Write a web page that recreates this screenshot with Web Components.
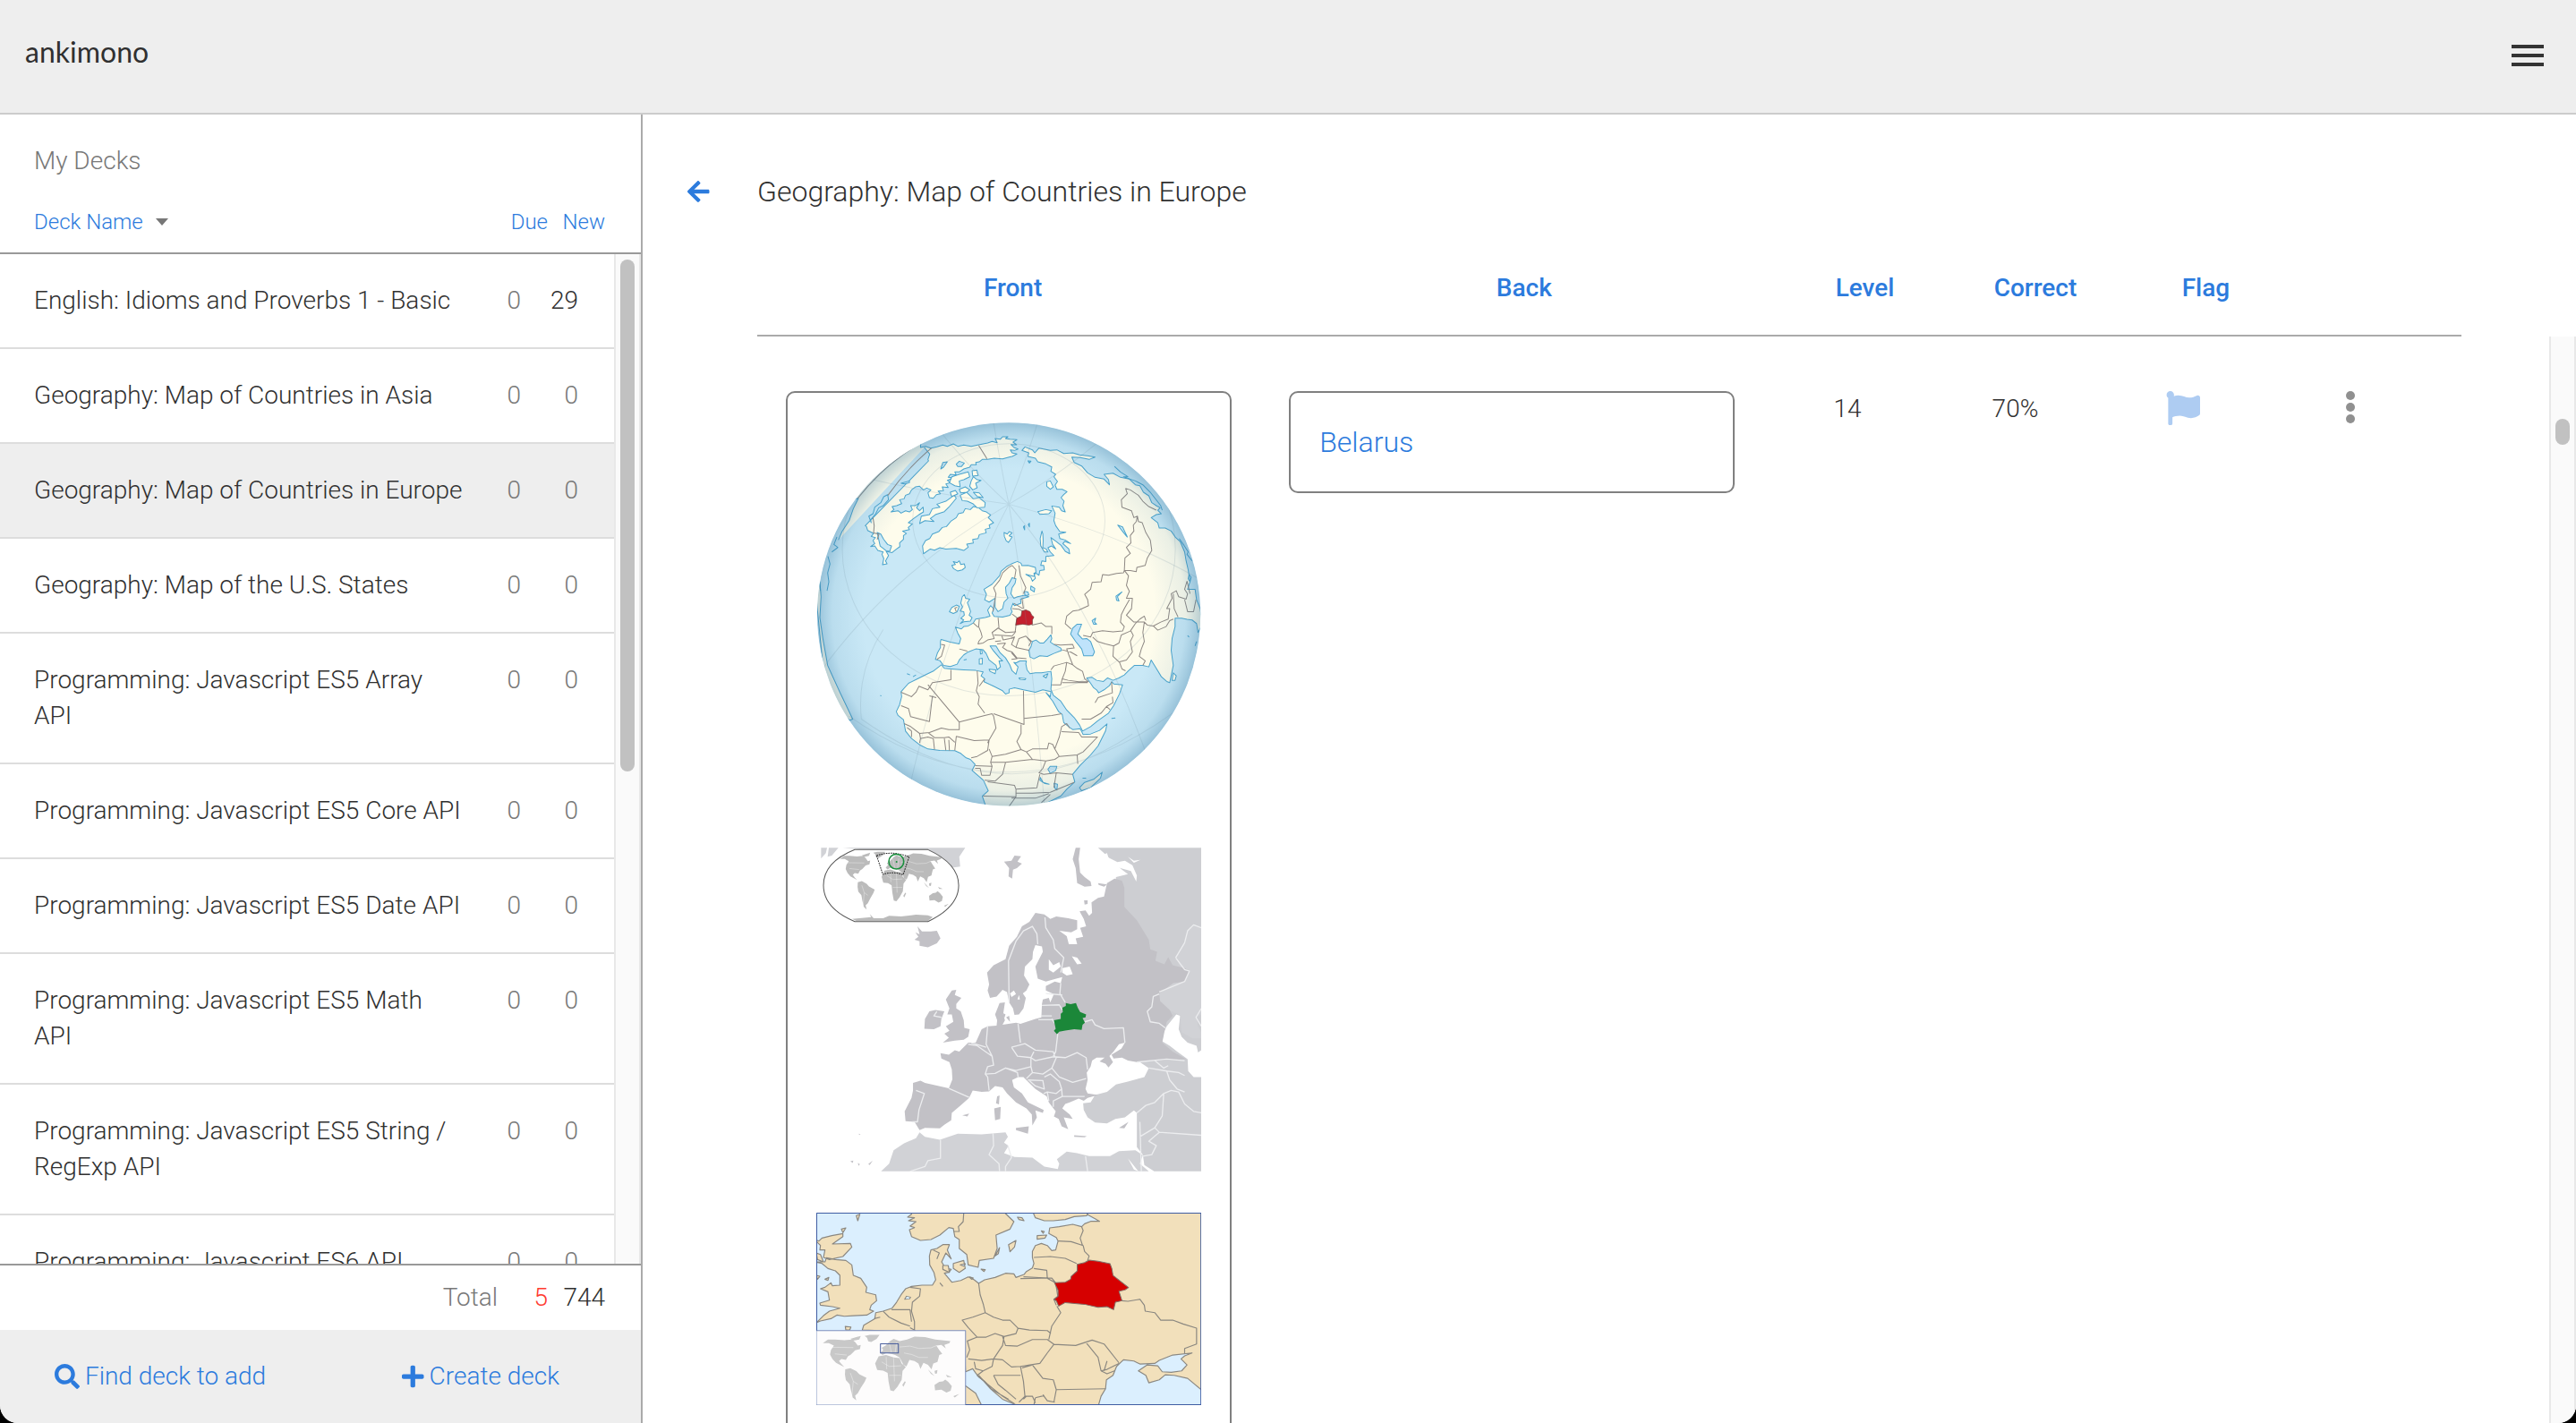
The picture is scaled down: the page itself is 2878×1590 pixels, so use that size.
<!DOCTYPE html>
<html lang="en">
<head>
<meta charset="utf-8">
<title>ankimono</title>
<style>
  html, body { margin: 0; height: 100%; }
  body {
    --ink: #303030; --muted: #787878; --link: #2c7bdd; --bar: #eee;
    background: #000; color: var(--ink);
    font: 300 28px/40px Roboto, "Liberation Sans", sans-serif;
  }
</style>
</head>
<body>
<anki-app>
  <app-header slot="header"></app-header>
  <deck-sidebar slot="sidebar">
    <deck-row due="0" new="29">English: Idioms and Proverbs 1 - Basic</deck-row>
    <deck-row due="0" new="0">Geography: Map of Countries in Asia</deck-row>
    <deck-row due="0" new="0" selected>Geography: Map of Countries in Europe</deck-row>
    <deck-row due="0" new="0">Geography: Map of the U.S. States</deck-row>
    <deck-row due="0" new="0">Programming: Javascript ES5 Array API</deck-row>
    <deck-row due="0" new="0">Programming: Javascript ES5 Core API</deck-row>
    <deck-row due="0" new="0">Programming: Javascript ES5 Date API</deck-row>
    <deck-row due="0" new="0">Programming: Javascript ES5 Math API</deck-row>
    <deck-row due="0" new="0">Programming: Javascript ES5 String / RegExp API</deck-row>
    <deck-row due="0" new="0">Programming: Javascript ES6 API</deck-row>
  </deck-sidebar>
  <deck-detail slot="main">Geography: Map of Countries in Europe</deck-detail>
</anki-app>

<script>
const define = (name, html) => {
  const template = document.createElement('template');
  template.innerHTML = `<style>:host,*{box-sizing:border-box}svg{display:block}
    button{font:inherit;color:inherit;background:none;border:0;padding:0;margin:0;cursor:pointer}</style>` + html;
  customElements.define(name, class extends HTMLElement {
    constructor() {
      super();
      this.attachShadow({ mode: 'open' }).append(template.content.cloneNode(true));
    }
    connectedCallback() {
      this.shadowRoot.querySelectorAll('[data-attr]').forEach(el => {
        const value = this.getAttribute(el.dataset.attr);
        el.textContent = value;
        el.classList.toggle('some', value !== '0');
      });
    }
  });
};

/* ---------- icons ---------- */
const icon = (w, d) => `<svg height="28" width="${w * 28 / 512}" viewBox="0 0 ${w} 512" fill="currentColor" aria-hidden="true"><path d="${d}"/></svg>`;
const ICONS = {
  search: icon(512, 'M505 442.7L405.3 343c-4.5-4.5-10.6-7-17-7H372c27.6-35.3 44-79.7 44-128C416 93.1 322.9 0 208 0S0 93.1 0 208s93.1 208 208 208c48.3 0 92.7-16.4 128-44v16.3c0 6.4 2.5 12.5 7 17l99.7 99.7c9.4 9.4 24.6 9.4 33.9 0l28.3-28.3c9.4-9.4 9.4-24.6.1-34zM208 336c-70.7 0-128-57.2-128-128 0-70.7 57.2-128 128-128 70.7 0 128 57.2 128 128 0 70.7-57.2 128-128 128z'),
  plus: icon(448, 'M416 208H272V64c0-17.67-14.33-32-32-32h-32c-17.67 0-32 14.33-32 32v144H32c-17.67 0-32 14.33-32 32v32c0 17.67 14.33 32 32 32h144v144c0 17.67 14.33 32 32 32h32c17.67 0 32-14.33 32-32V304h144c17.67 0 32-14.33 32-32v-32c0-17.67-14.33-32-32-32z'),
  back: icon(448, 'M257.5 445.1l-22.2 22.2c-9.4 9.4-24.6 9.4-33.9 0L7 273c-9.4-9.4-9.4-24.6 0-33.9L201.4 44.7c9.4-9.4 24.6-9.4 33.9 0l22.2 22.2c9.5 9.5 9.3 25-.4 34.3L136.6 216H424c13.3 0 24 10.7 24 24v32c0 13.3-10.7 24-24 24H136.6l120.5 114.8c9.8 9.3 10 24.8.4 34.3z'),
  flag: icon(512, 'M349.565 98.783C295.978 98.783 251.721 64 184.348 64c-24.955 0-47.309 4.384-68.045 12.013a55.947 55.947 0 0 0 3.586-23.562C118.117 24.015 94.806 1.206 66.338.048 34.345-1.254 8 24.296 8 56c0 19.026 9.497 35.825 24 45.945V488c0 13.255 10.745 24 24 24h16c13.255 0 24-10.745 24-24v-94.4c28.311-12.064 63.582-22.122 114.435-22.122 53.588 0 97.844 34.783 165.217 34.783 48.169 0 86.667-16.294 122.505-40.858C506.84 359.452 512 349.571 512 339.045v-243.1c0-23.393-24.269-38.87-45.485-29.016-34.338 15.948-76.454 31.854-116.95 31.854z')
};

/* ---------- shell ---------- */
define('anki-app', `
<style>
  :host { display: flex; flex-direction: column; height: 100vh; background: #fff; border-radius: 0 0 20px 20px; overflow: hidden; }
  .body { flex: 1; display: flex; min-height: 0; }
  ::slotted([slot=sidebar]) { flex: none; width: 718px; }
  ::slotted([slot=main]) { flex: 1; min-width: 0; }
</style>
<slot name="header"></slot>
<div class="body"><slot name="sidebar"></slot><slot name="main"></slot></div>`);

define('app-header', `
<style>
  :host { display: block; flex: none; background: var(--bar); border-bottom: 2px solid #ccc; }
  header { display: flex; justify-content: space-between; height: 126px; padding: 38px 36px 0 28px; align-items: flex-start; }
  a { font: 400 32px/40px Lato, sans-serif; color: var(--ink); text-decoration: none; }
  button { display: grid; gap: 6px; width: 36px; padding: 12px 0; }
  i { height: 4px; background: #333; }
</style>
<header><a href="#">ankimono</a><button aria-label="Menu"><i></i><i></i><i></i></button></header>`);

define('scroll-track', `
<style>
  :host { display: block; flex: none; width: 30px; background: #fafafa; border: 2px solid #e8e8e8; border-width: 0 2px; padding: 6px 5px; }
  :host([plain]) { padding-top: 92px; }
  div { height: 572px; border-radius: 8px; background: #c1c1c1; }
  :host([plain]) div { height: 29px; }
</style><div></div>`);

/* ---------- sidebar ---------- */
define('deck-sidebar', `
<style>
  :host { display: flex; flex-direction: column; border-right: 2px solid #aaa; }
  .top { padding: 32px 0 14px; border-bottom: 2px solid #999; }
  h2 { margin: 0 0 28px; padding: 0 38px; font: inherit; color: var(--muted); }
  .cols { display: grid; grid-template-columns: 1fr 56px 64px; padding: 0 40px 0 38px; text-align: right; }
  .top .cols { font-size: 24px; color: var(--link); }
  .cols > :first-child { justify-self: start; }
  .cols button { text-align: right; white-space: nowrap; }
  .sort { display: flex; align-items: center; gap: 14px; }
  .sort::after { content: ""; border: 7px solid transparent; border-top: 8px solid #777; border-bottom: 0; }
  .mid { flex: 1; display: flex; min-height: 0; overflow: hidden; }
  .list { flex: 1; overflow: hidden; }
  .total { padding-block: 16px; border-top: 2px solid #999; }
  .cols > .label { justify-self: end; color: var(--muted); }
  .due { color: #ff3b30; }
  footer { display: flex; background: var(--bar); height: 104px; }
  footer button { flex: 1; display: flex; align-items: center; justify-content: center; gap: 6px; color: var(--link); }
</style>
<div class="top">
  <h2>My Decks</h2>
  <div class="cols"><button class="sort">Deck Name</button><button>Due</button><button>New</button></div>
</div>
<div class="mid"><div class="list"><slot></slot></div><scroll-track></scroll-track></div>
<div class="cols total"><span class="label">Total</span><span class="due">5</span><span>744</span></div>
<footer><button>${ICONS.search}<span>Find deck to add</span></button><button>${ICONS.plus}<span>Create deck</span></button></footer>`);

define('deck-row', `
<style>
  :host { display: block; border-bottom: 2px solid #ddd; }
  :host([selected]) { background: var(--bar); }
  a { display: grid; grid-template-columns: 1fr 64px 64px; padding: 32px 40px 32px 38px; color: inherit; text-decoration: none; }
  span { text-align: right; color: var(--muted); }
  .some { color: var(--ink); }
</style>
<a href="#"><div><slot></slot></div><span data-attr="due"></span><span data-attr="new"></span></a>`);

/* ---------- deck detail ---------- */
define('deck-detail', `
<style>
  :host { display: flex; flex-direction: column; }
  .title { display: flex; align-items: center; padding: 64px 128px 66px 50px; }
  .title button { width: 78px; color: var(--link); }
  h1 { margin: 0; font: 300 32px/44px Roboto, sans-serif; }
  table { width: 100%; table-layout: fixed; border-collapse: collapse; }
  .wide { width: 30%; }
  .head { padding: 0 128px; }
  th { padding: 0 0 32px; border-bottom: 2px solid #aaa; font-weight: 500; color: var(--link); }
  .scroll { flex: 1; display: flex; min-height: 0; overflow: hidden; }
  .pane { flex: 1; padding: 61px 128px 0; overflow: hidden; }
  td { padding: 0; vertical-align: top; text-align: center; }
  td.wide { padding: 0 32px; text-align: left; }
  td button { display: block; margin: auto; }
  .flag { color: #aeccf2; } .flag svg { width: 38px; height: 38px; }
  .more { display: grid; gap: 3px; padding-block: 0; }
  .more i { width: 10px; height: 10px; border-radius: 5px; background: #909090; }
  .more { width: 10px; }
</style>
<div class="title"><button aria-label="Back">${ICONS.back}</button><h1><slot></slot></h1></div>
<div class="head"><table><thead><tr>
  <th class="wide">Front</th><th class="wide">Back</th><th>Level</th><th>Correct</th><th>Flag</th><th></th>
</tr></thead></table></div>
<div class="scroll">
  <div class="pane"><table><tbody><tr>
    <td class="wide"><flash-card><globe-map></globe-map><europe-map></europe-map><region-map></region-map></flash-card></td>
    <td class="wide"><flash-card>Belarus</flash-card></td>
    <td>14</td><td>70%</td>
    <td><button class="flag" aria-label="Flag card">${ICONS.flag}</button></td>
    <td><button class="more" aria-label="More"><i></i><i></i><i></i></button></td>
  </tr></tbody></table></div>
  <scroll-track plain></scroll-track>
</div>`);

define('flash-card', `
<style>
  :host { display: block; padding: 32px; border: 2px solid #808080; border-radius: 10px; color: var(--link); font-size: 32px; line-height: 46px; }
  ::slotted(*) { margin-bottom: 46px; }
</style><slot></slot>`);

/* ---------- maps ---------- */
const GRAT = [15, 50, 80, 118, 150, 188, 222, 258, 292, 330].map(a => {
  const r = a * Math.PI / 180;
  return `M711 340Q${711 + 500 * Math.cos(r)} ${340 + 500 * Math.sin(r)} ${711 + 1000 * Math.cos(r) * .8} ${340 + 1300 * Math.sin(r)}`;
}).join('');

define('globe-map', `
<style>:host{display:block}svg{width:100%}</style>
<svg viewBox="66 63 1290 1290" role="img" aria-label="Globe with Belarus highlighted" stroke-linejoin="round">
<defs>
 <clipPath id="c"><circle cx="711" cy="709" r="642"/></clipPath>
 <radialGradient id="g"><stop offset=".76" stop-color="#357ba4" stop-opacity="0"/><stop offset=".92" stop-color="#357ba4" stop-opacity=".1"/><stop offset="1" stop-color="#2b6f9a" stop-opacity=".32"/></radialGradient>
</defs>
<g clip-path="url(#c)">
<rect x="60" y="60" width="1300" height="1300" fill="#c9e8f6"/>
<g fill="#fefcec" stroke="#4aa3cc" stroke-width="3">
<path d="M140 460L152 432 176 395 190 355 207 320 150 330 200 200 420 90 415 150 432 146 450 152 470 148 490 142 505 146 525 138 540 146 560 142 585 146 610 141 625 138 640 135 655 130 672 134 665 120 683 122 690 114 708 114 700 120 715 122 738 124 725 132 737 141 718 140 728 150 742 155 730 160 716 158 722 168 738 172 722 180 712 182 690 188 662 186 640 190 622 190 612 198 600 200 602 208 585 208 580 216 560 222 545 232 530 232 535 242 515 240 508 250 525 252 505 260 515 268 500 272 508 284 488 282 492 295 474 296 482 305 468 308 458 320 445 318 440 302 450 292 436 286 425 292 412 280 398 282 385 292 378 305 365 310 360 322 345 325 352 338 335 345 320 348 326 358 316 366 340 362 350 370 365 362 378 366 388 358 382 345 398 345 412 335 402 352 412 362 424 350 425 366 410 375 392 388 374 402 388 406 374 418 378 425 355 430 368 438 358 445 358 458 345 470 346 482 335 490 320 502 300 498 308 512 298 530 303 540 288 543 292 522 286 508 290 500 272 495 262 480 248 482 262 472 256 462 264 452 250 448 258 438 238 428 234 415 230 412 442 195 440 190 446 172 428 150 462Z"/>
<path d="M425 506L422 480 432 462 446 455 455 440 476 432 488 418 502 415 518 396 535 385 542 372 558 368 565 355 582 358 592 348 610 352 622 362 636 366 650 376 642 385 660 402 645 410 648 420 632 424 635 436 612 442 608 455 590 458 592 470 570 474 575 484 560 495 535 488 500 490 480 486 462 494 448 490Z"/>
<path d="M520 545L532 542 525 532 538 536 545 530 550 542 562 540 565 552 555 560 540 564 526 556ZM555 650L562 643 566 655 580 658 572 670 578 685 583 700 578 712 588 720 582 732 560 734 548 740 560 728 550 722 562 712 560 700 548 698 556 684 550 672ZM512 700L520 686 535 678 545 682 538 700 525 706ZM615 828L620 826 622 840 616 842ZM612 858L622 856 622 876 612 876ZM645 893L668 895 665 908 648 900ZM745 922L768 924 765 928 748 927ZM826 916L842 908 836 922ZM1024 1238L1018 1258 985 1290 955 1300 948 1290 965 1272 995 1262ZM1262 905L1272 915 1268 930 1258 930ZM695 435L706 440 712 432 722 436 712 446 722 450 710 468 702 462 696 448ZM822 430L816 455 818 480 830 500 842 500 836 490 825 486 826 462 825 440ZM838 265L850 262 860 282 850 290 838 280ZM808 365L835 358 855 362 845 372 815 374ZM775 195L785 196 780 202ZM760 416L764 412 764 426ZM776 408L780 404 780 416Z"/>
<path d="M500 330L528 310 535 320 510 350 495 365 465 375 448 388 460 398 430 395 412 405 418 380 445 375 455 355 480 350 470 340ZM548 310L570 300 592 322 612 318 632 335 630 350 605 352 590 338 572 330 555 328ZM520 248L545 240 575 232 580 248 560 258 545 262 548 282 530 278 512 268ZM588 228L604 226 608 244 590 246ZM585 262L592 248 605 258 618 260 600 270 605 285 590 292 580 280ZM545 290L565 282 580 292 570 300 550 302ZM515 300L532 294 540 305 520 315ZM592 300L612 302 625 318 605 314Z"/>
<path d="M740 532L752 538 755 546 775 545 800 552 802 568 795 572 800 588 790 598 785 585 768 575 795 582 800 570 812 578 815 562 830 560 828 545 818 545 822 530 835 532 835 515 862 512 850 500 842 486 854 480 868 490 858 475 852 452 870 465 886 478 900 498 915 506 912 490 892 472 898 465 918 472 900 460 882 455 878 440 902 434 882 432 868 412 862 395 866 370 855 346 880 350 888 362 900 366 892 345 896 330 886 318 895 308 906 298 890 290 872 290 866 276 874 264 862 248 868 240 852 230 855 215 835 205 808 198 800 186 775 180 778 168 755 160 765 148 790 158 798 168 812 152 850 160 872 158 895 170 925 168 948 175 975 178 1000 182 980 190 950 184 922 182 930 200 955 212 975 235 1000 250 1030 256 1048 275 1045 258 1030 240 1060 236 1085 250 1115 256 1135 275 1150 278 1162 300 1180 312 1190 335 1205 345 1218 352 1210 360 1222 372 1205 375 1188 385 1210 402 1215 420 1235 420 1255 430 1270 452 1285 465 1300 500 1305 530 1312 560 1318 600 1310 625 1335 625 1340 660 1352 690 1360 740 1345 770 1340 740 1325 728 1308 726 1290 722 1268 722 1268 750 1258 790 1255 830 1262 880 1250 938 1240 934 1222 918 1205 890 1188 862 1180 885 1160 880 1132 880 1112 898 1098 912 1080 922 1060 930 1042 922 1028 934 1005 930 990 920 972 922 985 940 995 955 1005 962 1012 972 1030 962 1048 948 1056 935 1062 942 1092 945 1082 975 1062 1015 1045 1040 1010 1065 985 1085 958 1100 948 1080 930 1055 905 1030 885 1000 860 980 852 960 855 925 852 900 820 905 800 905 782 908 772 895 768 875 770 865 748 865 735 872 728 870 742 885 735 910 722 898 714 878 700 855 682 838 668 815 648 815 660 832 680 855 690 865 678 865 683 885 672 895 668 880 645 862 635 840 625 828 600 825 575 835 560 845 545 862 538 876 515 884 492 880 480 864 465 860 472 838 482 820 482 800 484 793 515 802 545 808 550 790 540 772 532 752 552 758 560 750 575 748 592 738 600 725 632 720 648 715 640 695 650 680 660 690 655 705 662 716 690 718 715 712 722 700 718 690 725 672 730 680 752 672 750 658 778 650 765 645 740 650 728 655 718 640 722 620 732 605 735 590 722 586 712 605 700 618 702 640 708 655 695 668 690 690 675 700 665 685 665 655 645 668 630 660 636 642 628 625 655 608 680 580 685 565 705 548 720 540Z"/>
<path d="M485 878L495 890 518 892 560 895 600 897 625 902 618 915 630 925 628 935 660 950 690 965 700 976 712 972 712 960 730 955 760 962 800 970 825 962 852 968 850 985 836 972 858 1000 878 1035 890 1045 895 1072 915 1088 925 1095 950 1092 960 1112 985 1110 1015 1098 1040 1076 1035 1100 1010 1150 985 1180 950 1215 925 1245 932 1270 905 1295 885 1318 840 1340 800 1370 640 1370 622 1318 642 1300 626 1265 588 1232 598 1212 582 1195 568 1190 550 1175 530 1166 480 1165 440 1160 415 1148 385 1125 365 1100 358 1062 340 1048 334 1035 345 1012 352 985 350 968 375 940 405 925 435 910 460 898Z"/>
<path d="M60 595L78 600 82 650 78 720 88 790 104 880 122 920 145 970 188 1060 178 1064 100 1000Z"/>
</g>
<g fill="#c9e8f6" stroke="#4aa3cc" stroke-width="3">
<path d="M790 800L802 795 815 805 828 805 840 792 852 778 855 790 850 802 862 810 885 822 888 830 862 840 840 850 815 848 795 858 782 852 778 830 785 818Z"/>
<path d="M925 755L940 742 955 742 948 760 942 775 958 792 972 790 985 800 998 835 992 848 962 848 955 825 935 800 918 775Z" fill="#bfe3fb"/>
<path d="M842 1228L850 1218 872 1218 868 1232 850 1242ZM990 730L1002 722 998 735 1005 742 995 742ZM1072 662L1070 648 1090 634 1075 650 1080 664ZM1076 410L1092 416 1108 450 1096 436ZM762 632L775 634 778 644 766 646ZM785 614L798 622 796 634 784 626ZM483 222L490 200 505 198 492 216ZM535 206L545 196 562 202 552 214 540 214ZM350 270L378 262 378 268 362 272ZM242 380L256 372 262 350 282 335 292 315 305 308 308 325 290 345 275 352 265 372 248 392 250 402ZM270 435L282 440 292 458 305 475 318 480 312 498 300 496 280 480ZM816 1255L826 1272 846 1278 832 1276 815 1265ZM862 1275L874 1278 872 1298 866 1292Z"/>
<path d="M1065 213L1085 232 1110 248 1095 248 1135 262 1160 275 1185 300 1220 345 1225 360M1315 575L1322 585 1318 600 1312 590ZM1282 455L1298 478 1312 500 1308 508 1325 530M105 515L112 540 104 570 108 600 102 630M135 450L125 475 138 485 118 500M75 585L80 630M370 908L380 912M390 918L400 912M1055 1058L1068 1056M958 1258L970 1258M560 862L570 860M280 981L284 982M1310 780L1315 785M1340 800L1335 815" fill="none"/>
</g>
<g fill="none" stroke="#8d8783" stroke-width="3">
<path d="M610 143L638 188M452 152Q370 220 306 310M425 130Q300 200 205 320M256 385L260 412 258 436 276 440 270 458M1102 287L1118 292 1145 310 1160 330 1180 348 1205 360M1102 287L1108 305 1088 325 1090 350 1122 362 1130 385 1142 380 1145 398 1158 402 1170 435 1185 460 1190 495 1175 520 1168 545 1140 552 1138 566 1118 562 1098 562 1100 520 1118 505 1105 485 1120 470 1118 445 1130 430 1128 410 1138 398 1142 380M1098 562L1095 570 1072 572 1045 578 1025 576 1020 600 990 602 985 625 965 642 975 660 978 680 945 695 925 698 905 715 900 740 920 758M1098 562L1112 580 1105 612 1115 632 1105 655 1125 655 1122 690 1105 712 1130 735 1165 735 1175 745 1195 748 1220 735 1245 725 1250 690 1240 690 1258 655 1255 640 1272 630 1280 650 1305 658 1310 640 1300 625 1308 598 1318 640M960 780L985 785 992 770 1025 764 1060 768 1092 765 1098 750 1085 735 1088 710 1098 690 1115 660M992 785L1008 800 1035 808 1062 815 1080 805 1088 778 1118 765 1135 740 1150 725 1165 715 1170 730M1062 815L1060 850 1082 870 1090 892 1102 898M1082 868L1105 862 1125 835 1118 800 1128 780 1120 765M1165 735L1160 770 1165 800 1155 825 1148 850 1168 865 1160 880M1195 748L1210 762 1238 750 1250 730 1262 725M1262 640L1265 690 1278 718M1300 660L1310 700 1330 700 1338 660M862 810L885 812 925 810 930 822 905 825 912 845 920 865 925 878 905 870 862 882 852 895M890 828L918 835 940 848M925 878L940 890 958 900 965 925 978 935 945 935 910 930 890 925 900 900 905 870M890 925L885 945 855 945M890 938L935 938 975 938M1055 935L1058 972 1010 988 1000 1005M1058 985L1060 1005 1038 1018 1020 1040 985 1060 955 1060M1038 1018L1050 1028"/>
<path d="M517 895L517 928 455 938 440 962 410 950 400 970 385 985 350 970M440 945L545 1070 630 1048 655 1042 660 1050 668 1090 645 1130 640 1140M445 982L468 988M455 982L445 1068 382 1052 375 1025 350 1015M605 898L608 940 602 965 612 985 608 1010 630 1040M630 925L612 950M760 965L762 1078 660 1042M762 1058L855 1048 888 1042M752 1078L752 1108 738 1135 752 1162 700 1178 655 1185 645 1160M752 1162L770 1170 790 1160 840 1160 845 1140 858 1145 865 1160 880 1120 888 1085 905 1075 915 1090M888 1102L945 1105 955 1120 1008 1120 960 1170 940 1180 880 1185 865 1160M940 1180L942 1210M770 1170L790 1195 835 1200 865 1195 880 1185M700 1205L790 1195M700 1205L690 1245 665 1268 630 1265M655 1185L650 1205 700 1205M650 1205L655 1218 598 1216M598 1225L615 1225 620 1248 648 1248 655 1218M585 1190L605 1185 640 1165 645 1130 595 1132 535 1118 530 1165M545 1070L545 1095 510 1095 485 1090 445 1105 412 1108 382 1085 360 1075M412 1108L415 1125 440 1120 458 1125 462 1162M440 1105L462 1122 495 1122 510 1120 530 1138M495 1125L500 1165M510 1130L512 1166M385 1120L385 1100 370 1088M415 1125L412 1140M835 1200L825 1225 812 1240 828 1245 870 1240 925 1245M815 1245L805 1290 735 1295 730 1282 640 1270M735 1295L735 1320 625 1318M735 1320L712 1352M735 1308L790 1308 850 1305 930 1272M720 1325L800 1325 845 1310M820 1340L850 1312M870 1240L862 1290"/>
<path d="M538 685L530 688 535 700M484 810L496 812 485 850 470 860M545 825L572 832M592 738L608 752M612 725L610 750 618 770 622 785M622 785L610 800 608 808 625 805 640 795 662 790 655 770 675 755 700 770 735 768M675 720L678 755M735 745L732 770 722 782 690 780 662 778M688 782L692 795 715 790 730 785 720 810 735 820 745 790 768 782 788 800M735 820L780 830M700 805L690 820 705 830 722 835 738 855 770 858M672 808L700 805M665 800L685 798M730 785L720 790M768 782L785 802 778 815M720 860L738 858 720 838M788 745L820 738 835 750 855 750 855 775M735 745L738 720 722 708M722 690L745 692 760 700M728 672L758 690M755 655L760 690M658 700L668 640 660 620 680 595 690 570 710 552 722 545M722 545L735 560 730 590M745 545L750 580 768 620 760 640"/>
</g>
<path d="M734 745L738 722 752 715 755 698 768 694 782 700 788 712 795 718 790 728 790 742 778 745 758 742Z" fill="#c3202e" stroke="#6b3b3b" stroke-width="2"/>
<g fill="none" stroke="#7d97a5" stroke-opacity=".2" stroke-width="3"><path d="${GRAT}"/><ellipse cx="711" cy="395" rx="322" ry="258"/><ellipse cx="711" cy="490" rx="558" ry="492"/><path d="M217 1060Q200 900 290 760M217 1060Q700 1400 1125 1110M175 1050Q720 1430 1260 1040"/></g>
<circle cx="711" cy="709" r="643" fill="url(#g)"/>
</g></svg>`);

/* World silhouette shared by both inset maps */
const WORLD = `
<path d="M88 512L105 500 128 500 160 502 185 500 196 508 205 520 215 518 212 532 196 536 182 550 172 556 165 568 150 565 142 572 150 582 160 592 148 586 132 578 120 565 112 550 115 535 125 520 108 512ZM180 498L200 492 215 488 210 500 190 504ZM228 488L245 484 278 484 268 498 250 508 240 506 236 494ZM163 600L180 596 200 606 210 616 234 628 228 642 215 662 205 680 196 688 200 704 188 694 182 670 178 650 165 636 162 618ZM263 580L275 556 300 552 325 560 345 562 352 580 366 592 355 605 352 635 338 658 325 673 314 670 308 640 305 612 290 604 270 602ZM362 640L366 642 358 658 354 652ZM290 535L285 528 298 520 312 506 325 498 345 505 370 500 395 490 430 492 465 500 515 505 512 512 495 518 500 530 485 518 468 520 478 535 488 548 478 552 472 575 458 580 452 600 440 585 425 578 415 598 408 580 395 572 378 568 368 590 358 585 345 560 330 552 318 548 300 545 288 552 280 545ZM462 652L478 642 490 640 498 634 508 642 520 656 516 672 502 678 485 668 464 670ZM440 600L452 612 462 622 450 615ZM462 605L472 602 470 614 464 615ZM500 618L520 626 505 626ZM525 690L545 682 530 694Z"/>`;
const WORLD_LINES = `<path d="M120 526L190 527M128 548L168 552M180 612L190 640 205 650M190 640L185 690M285 575L310 590 350 588M300 558L302 600M325 562L328 640M310 620L350 620M345 525L380 522 410 530 450 528 470 520M360 545L385 550 410 560 440 560M310 510L318 545M335 510L330 545"/>`;

define('europe-map', `
<style>:host{display:block}svg{width:100%}</style>
<svg viewBox="66 81 1290 1086" role="img" aria-label="Map of Europe with Belarus highlighted" stroke-linejoin="round">
<g fill="#d1d2d6">
<path d="M82 82L102 82 98 100 82 118ZM108 82L140 82 118 108 104 112ZM155 82L565 82 545 112 548 145 510 150 350 100Z"/>
<path d="M1010 82L1356 82 1356 760 1345 768 1340 745 1310 735 1290 715 1280 690 1285 645 1272 640 1240 680 1230 700 1225 730 1250 745 1275 765 1310 790 1312 830 1330 850 1356 850 1356 1166 1198 1166 1165 1145 1160 1110 1140 1085 1140 970 1130 962 1100 985 1068 990 1040 1005 1000 1002 975 985 962 960 960 938 985 935 1000 910 1040 900 1070 875 1110 865 1165 850 1180 820 1150 800 1140 790 1050 400 1070 180 1110 170 1090 155 1050 120 1030 100Z" fill="#cdced2"/>
<path d="M1270 450L1300 400 1310 360 1330 340 1356 345 1356 640 1340 650 1345 680 1356 700 1356 720 1325 720 1290 700 1285 642 1215 610 1208 575 1240 535 1300 530 1316 490 1290 490Z"/>
<path d="M283 1166L310 1140 325 1095 360 1072 400 1055 412 1035 430 1050 480 1060 540 1040 620 1042 700 1035 708 1050 695 1070 710 1080 695 1105 730 1118 790 1120 830 1150 875 1158 880 1140 872 1125 905 1100 940 1105 980 1115 1050 1115 1080 1098 1135 1095 1160 1112 1150 1140 1180 1166Z"/>
</g>
<g fill="#c2c1c6">
<path d="M1040 200L1065 185 1090 192 1098 215 1098 280 1140 325 1180 390 1185 422 1208 430 1202 460 1232 472 1245 448 1260 475 1300 485 1316 495 1300 530 1262 535 1215 570 1218 595 1250 625 1260 645 1240 665 1232 700 1225 735 1260 765 1305 790 1200 795 1140 800 1110 795 1090 785 1062 788 1055 775 1088 755 1100 735 1080 740 1062 765 1048 780 1060 800 1045 818 1035 805 1015 798 1032 785 1005 785 990 795 985 815 972 835 975 860 968 890 975 905 1010 910 975 920 962 930 945 922 915 935 900 940 890 955 915 975 925 990 895 985 910 1025 888 1015 878 990 862 982 868 965 845 935 838 915 800 890 775 865 760 850 742 850 722 860 728 885 755 905 775 935 828 960 825 970 800 962 805 985 790 1012 788 975 770 955 735 935 705 905 690 885 665 880 645 898 620 900 590 895 578 920 550 945 520 970 518 995 495 1010 480 1022 430 1020 412 1028 395 1000 365 998 362 965 385 920 390 895 390 870 415 862 430 870 510 888 522 858 520 825 512 800 485 788 482 770 510 775 530 760 545 765 575 735 600 735 620 690 640 680 670 678 672 660 665 640 680 602 698 600 692 640 698 660 690 675 735 668 750 672 800 655 820 650 822 605 825 590 845 585 850 600 862 572 835 560 835 545 865 530 885 535 890 515 870 520 835 530 808 520 800 480 825 430 822 412 800 408 792 430 790 455 765 480 762 510 780 540 770 560 758 570 768 585 760 620 745 640 730 642 725 620 712 600 705 565 690 558 670 580 648 585 640 560 645 540 638 500 660 475 700 455 712 410 738 380 755 345 780 330 800 300 830 305 850 320 870 312 910 318 940 325 940 355 920 365 880 360 905 378 912 405 940 405 935 385 960 380 950 350 970 345 962 320 948 295 968 292 980 310 990 300 988 265 1010 250 1030 245Z"/>
<path d="M935 82L950 82 945 120 950 165 965 180 985 195 988 210 965 212 940 200 935 150 925 120ZM1010 200L1040 205 1030 212 1012 206ZM963 258L975 258 975 270 965 272ZM695 128L720 125 730 108 752 110 740 128 755 135 738 150 725 155 722 185 710 178 712 150ZM398 365L412 372 405 345 420 362 450 362 470 360 482 385 470 402 440 415 412 410 412 395 395 390 408 380ZM500 590L520 560 535 558 530 575 552 585 535 605 535 620 550 630 560 660 562 685 580 690 575 715 560 725 530 728 490 735 510 718 495 705 512 695 500 680 525 665 520 640 505 640 512 620ZM430 655L445 630 465 625 495 630 485 655 482 680 460 690 428 688ZM662 955L684 950 682 990 665 995ZM672 915L680 912 678 942 668 938ZM735 1020L778 1015 775 1040 735 1028ZM930 1045L972 1048 965 1052 930 1050ZM1080 1020L1112 1000 1098 1022ZM555 978L578 972 572 982ZM690 635L700 640 695 655ZM702 650L712 645 715 665ZM180 1132L190 1130 188 1138ZM205 1138L212 1142 208 1148ZM240 1142L255 1130 245 1145ZM70 835L80 832M104 878L110 892ZM208 1040L214 1042 210 1044Z"/>
</g>
<g fill="#fff"><path d="M922 445L940 450 955 470 940 472ZM890 485L915 480 925 505 905 510 890 500ZM845 455L860 475 880 465 885 480 860 500 845 490ZM715 570L728 560 735 572 720 582ZM740 590L745 575 748 590ZM1012 110L1040 100 1045 115 1075 130 1100 125 1125 140 1140 175 1138 195 1120 160 1085 150 1060 140ZM1110 112L1130 125 1152 122 1130 132ZM1110 1122L1145 1166 1130 1160Z"/></g>
<g fill="none" stroke="#ecedef" stroke-width="4">
<path d="M712 600L710 460 735 395 760 360 790 345 805 370 808 405M832 315L835 350 860 390 865 420 895 450 885 500M885 535L882 570 900 600M835 570L890 575M822 610L880 608 890 625M818 645L855 645M855 655L865 670M810 658L860 658M742 672L750 735M720 750L765 738 800 760 860 765 865 782M875 705L868 765 860 780M965 665L990 658 1000 675 1030 688 1095 685 1100 735M720 750L740 780 785 785 795 765M640 680L635 740 655 780 660 810 640 815 632 840 665 838 700 820 735 828 785 815 785 785M575 740L605 745 640 770 655 780M585 735L635 750M785 785L800 795 860 782 900 785 940 768 970 785 975 825M700 820L740 835 742 850M785 815L790 835 825 840 855 820 870 785M855 820L880 850 925 868 970 855M790 835L770 855M775 860L825 862 830 890 800 880 780 862M830 850L850 840 880 865 888 890 870 905 840 900 828 905M888 890L890 915 965 915M860 950L860 930 890 915M840 900L845 930M510 888L578 918M645 895L640 850 632 840M400 895L428 905 410 960 405 1000 388 1000M470 630L460 645 485 650M482 1060L482 1122 440 1130 430 1150 380 1166M658 1038L660 1080 645 1110 678 1140 680 1166M708 1080L720 1120 700 1150 700 1166M968 1115L975 1166M1140 970L1170 945 1200 935 1230 905 1255 895 1280 900 1300 940 1330 965 1356 970M1230 905L1225 980 1200 1020 1150 1050M1150 1000L1155 1166M1200 1020L1215 1035 1356 1045M1215 1035L1180 1065 1205 1080 1190 1110 1160 1115M1140 800L1240 790 1300 795M1180 820L1240 830 1250 860 1275 890 1300 900M1240 830L1280 835 1300 845M1200 795L1230 820 1245 812M1215 572L1195 580 1190 615 1175 630 1185 665 1215 670 1235 685M1270 450L1300 400 1310 360 1330 340 1356 350M1270 450L1300 490 1316 495 1300 530 1215 565M1356 620L1338 650 1356 680"/>
</g>
<path d="M862 660L885 655 885 638 892 632 890 618 902 612 902 602 918 606 936 602 942 618 950 632 970 640 968 650 958 652 966 668 958 675 955 692 930 690 900 694 880 698 872 706 862 695 868 688Z" fill="#1b8739"/>
<path d="M195 88H440Q543 135 543 208Q543 280 440 329H195Q90 285 90 208Q90 130 195 88Z" fill="#fff"/>
<g transform="translate(75 -331) scale(.798 .88)"><g fill="#bbb">${WORLD}</g><g fill="none" stroke="#fff" stroke-opacity=".6" stroke-width="2">${WORLD_LINES}</g></g>
<path d="M186 320L250 314 245 304 258 318 290 318 310 310 350 312 400 306 440 308 456 314 440 327H200Z" fill="#bbb"/>
<path d="M195 88H440Q543 135 543 208Q543 280 440 329H195Q90 285 90 208Q90 130 195 88Z" fill="none" stroke="#555" stroke-width="3"/>
<path d="M268 108Q320 90 377 112L357 172Q320 160 289 171Z" fill="none" stroke="#222" stroke-width="3" stroke-dasharray="5 3"/>
<circle cx="334" cy="128" r="25" fill="none" stroke="#1b8f3e" stroke-width="5"/><circle cx="335" cy="129" r="3" fill="#1b8f3e"/>
</svg>`);

define('region-map', `
<style>:host{display:block}svg{width:100%}</style>
<svg viewBox="66 75 1290 645" role="img" aria-label="Central Europe with Belarus highlighted" stroke-linejoin="round">
<rect x="66" y="75" width="1290" height="645" fill="#dbeffe"/>
<g fill="#f2e0bb" stroke="#8a8780" stroke-width="3.5">
<path d="M1370 60L970 60 975 82 1000 95 1015 104 985 104 965 112 955 122 925 114 880 122 848 126 845 145 870 158 876 170 868 200 855 202 840 185 820 178 800 185 790 205 790 225 795 245 790 260 770 272 762 282 735 292 728 280 700 278 665 292 630 300 610 312 595 300 575 290 550 302 520 308 505 290 495 278 510 275 518 265 498 260 486 240 500 210 518 230 505 200 512 182 490 182 470 195 450 200 445 220 446 250 460 275 466 300 455 318 420 318 385 322 365 330 350 350 335 375 320 395 290 405 265 410 262 430 225 452 220 468 400 475 560 475 566 608 590 598 600 612 610 625 630 640 655 670 690 700 750 725 1010 725 1020 690 1035 665 1038 635 1060 620 1072 590 1095 568 1130 572 1150 582 1200 580 1215 570 1260 552 1325 545 1300 555 1288 565 1308 585 1290 605 1255 610 1225 608 1210 588 1175 585 1145 605 1170 620 1180 645 1215 635 1235 618 1265 620 1310 630 1370 680Z"/>
<path d="M380 60L385 80 372 90 395 92 375 102 400 105 380 120 395 125 378 132 385 155 415 168 450 165 480 150 510 125 525 128 530 155 545 165 545 195 570 215 575 250 608 258 612 235 660 228 672 195 668 150 715 130 728 105 700 78 690 60ZM786 60L800 92 830 102 860 102 900 98 930 88 972 85 980 60ZM60 240L95 240 100 226 130 232 165 235 185 250 190 285 215 295 235 325 232 342 265 350 268 370 250 385 245 400 258 405 235 418 190 420 160 422 135 418 115 430 80 438 66 444 90 420 110 405 145 395 120 390 80 385 78 378 110 368 105 340 80 330 95 325 115 310 120 320 145 318 145 285 130 270 105 262 85 245ZM60 165L75 170 85 160 118 152 155 145 155 155 120 180 180 178 185 190 155 222 110 232 90 225 95 200 78 200 80 185ZM60 635L566 655 600 680 622 725 560 725ZM525 245L560 235 565 262 545 275 525 262ZM490 252L508 252 512 275 490 265ZM710 182L735 168 730 190 715 206ZM665 220L680 192 676 212ZM806 152L838 150 832 160 806 164ZM740 90L755 92 762 102 745 98ZM618 264L632 266 628 272ZM200 85L212 80 205 102ZM150 130L165 126 155 142ZM95 298L108 292 105 302ZM66 285L78 288 70 298ZM163 456L182 458 178 468 165 468ZM820 136L830 138 826 144ZM66 210L80 215 90 240 70 232ZM580 290L592 294 586 298Z"/>
</g>
<path d="M362 365L368 355 382 358 378 364ZM548 250L566 246 560 254Z" fill="#dbeffe" stroke="#8a8780" stroke-width="3"/>
<g fill="none" stroke="#8a8780" stroke-width="3.5">
<path d="M560 75L558 105 542 122 545 138 525 138M955 122L960 135 950 160 958 185M876 170L920 172 960 185 965 205 980 220 975 235M795 225L850 222 900 228 938 245M795 262L838 268 840 294M760 290L838 294 868 310M750 296L855 294 868 310 875 355 862 365 870 385M610 312L615 350 625 380 632 410M872 388L885 410 855 455 845 500M632 410L660 425 690 435 715 435 742 462 735 480 695 490 665 480 635 492 605 492 575 460 555 435 590 425 632 410M742 462L780 468 840 470 852 480M605 492L572 505 580 535 570 560M695 490L690 520 660 565 620 570 575 565M690 490L700 520 740 522 790 500 840 500 862 516 840 545 815 580 750 590 720 592 690 568 660 565M660 565L655 590 625 605 600 598 595 575M862 516L935 520 990 502 1030 515 1080 578M968 508L1010 560 1020 605 1040 600 1080 580M1020 605L1040 615 1065 605M1040 572L1030 605M1090 370L1110 372 1150 365 1165 385 1168 405 1200 410 1220 435 1260 435 1295 448 1340 462 1340 515 1300 530 1300 548M750 590L760 640 765 690 745 710M755 595L790 585 825 630 860 635 870 668 1035 665M870 668L862 710M660 620L750 620M660 620L675 650 700 670 735 700M765 690L790 690 800 712M830 688L800 695M825 685L840 705 865 710M380 325L415 330 412 355 388 375 385 405 395 440 395 468M290 405L310 425 350 445 380 455M318 400L380 400 385 440M625 605L605 620 640 650 690 690 730 715M610 620L650 665 710 700M260 430L280 425M480 310L490 322M458 200L478 210 470 230M380 460L398 470M800 695L795 720M770 690L760 700"/>
</g>
<path d="M864 310L900 308 918 298 920 288 940 270 940 248 965 242 980 234 1010 238 1050 246 1056 262 1060 285 1085 305 1112 326 1100 334 1080 338 1090 370 1068 375 1062 400 1040 390 1010 392 965 382 900 376 878 388 870 370 862 366 876 355 876 335Z" fill="#d60000" stroke="#80706a" stroke-width="3"/>
<rect x="66" y="470" width="500" height="250" fill="#fdfcfc" stroke="#7d8fbd" stroke-width="3"/>
<g fill="#c8c8c8">${WORLD}</g><g fill="none" stroke="#fdfcfc" stroke-opacity=".6" stroke-width="2">${WORLD_LINES}</g>
<rect x="281" y="514" width="60" height="31" fill="none" stroke="#4a5f9e" stroke-width="3"/>
<path d="M67.500 470V76.500H1354.500V718.500H566" fill="none" stroke="#3f5da3" stroke-width="3"/>
</svg>`);
</script>
</body>
</html>
